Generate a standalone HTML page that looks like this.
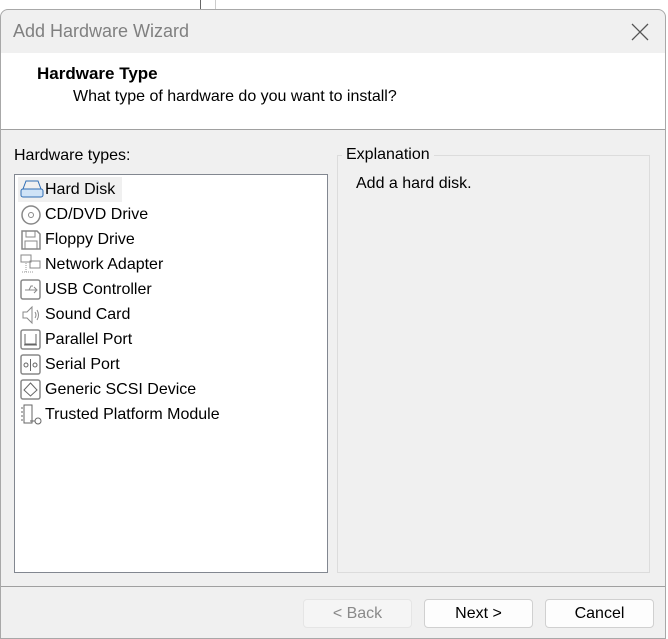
<!DOCTYPE html>
<html><head><style>
*{margin:0;padding:0;box-sizing:border-box}
body{width:668px;height:634px;background:#fff;font-family:"Liberation Sans",sans-serif;font-size:16px;color:#000;position:relative;overflow:hidden}
.a{position:absolute}
.dlg{left:0;top:9px;width:666px;height:630px;background:#f0f0f0;border:1px solid #a8a8a8;border-radius:8px 8px 0 0;overflow:hidden}
.btn{position:absolute;top:589px;height:29px;width:109px;background:#fdfdfd;border:1px solid #d0d0d0;border-radius:4px;text-align:center;line-height:27px;font-size:16px}
.item{position:absolute;left:3px;height:25px;line-height:25px;padding-left:27px;white-space:nowrap}
.item svg{position:absolute;left:2px;top:2px}
</style></head><body>
<div class="a" style="left:200px;top:0;width:1px;height:10px;background:#666"></div>
<div class="a" style="left:215px;top:0;width:1px;height:10px;background:#ccc"></div>
<div class="a dlg">
 <div class="a" style="left:12px;top:11px;font-size:18px;color:#808080">Add Hardware Wizard</div>
 <svg class="a" style="left:630px;top:13px" width="18" height="18"><path d="M1 1L17 17M17 1L1 17" stroke="#555" stroke-width="1.3"/></svg>
 <div class="a" style="left:0;top:43px;width:666px;height:77px;background:#fff;border-bottom:1px solid #a0a0a0"></div>
 <div class="a" style="left:36px;top:54px;font-weight:bold;font-size:17px">Hardware Type</div>
 <div class="a" style="left:72px;top:78px;font-size:16px">What type of hardware do you want to install?</div>
 <div class="a" style="left:13px;top:137px">Hardware types:</div>
 <div class="a" style="left:13px;top:164px;width:314px;height:399px;background:#fff;border:1px solid #828790">
  <div class="item" style="top:2px;background:#f0f0f0;width:104px">
   <svg width="24" height="20"><rect x="1" y="10" width="22" height="8" rx="2" fill="#cfe3f7" stroke="#2f6eb5"/><path d="M3 10 L6 2 H18 L21 10" fill="none" stroke="#2f6eb5"/></svg>Hard Disk</div>
  <div class="item" style="top:27px"><svg width="22" height="22"><circle cx="11" cy="11" r="9" fill="none" stroke="#888" stroke-width="1.5"/><circle cx="11" cy="11" r="2.5" fill="none" stroke="#888"/></svg>CD/DVD Drive</div>
  <div class="item" style="top:52px"><svg width="22" height="22"><path d="M2 2H17L20 5V20H2Z" fill="none" stroke="#888" stroke-width="1.5"/><rect x="6" y="2" width="9" height="6" fill="none" stroke="#888"/><rect x="5" y="12" width="12" height="8" fill="none" stroke="#888"/></svg>Floppy Drive</div>
  <div class="item" style="top:77px"><svg width="22" height="22"><rect x="1" y="1" width="10" height="7" fill="none" stroke="#888"/><rect x="10" y="7" width="10" height="7" fill="none" stroke="#888"/><path d="M2 18H14M6 9V18" stroke="#999" stroke-dasharray="1 1"/></svg>Network Adapter</div>
  <div class="item" style="top:102px"><svg width="22" height="22"><rect x="1" y="1" width="19" height="19" rx="2" fill="none" stroke="#888" stroke-width="1.5"/><path d="M5 11H16M14 8L17 11 14 14M9 11L11 7H13" fill="none" stroke="#888"/></svg>USB Controller</div>
  <div class="item" style="top:127px"><svg width="22" height="22"><path d="M3 8H7L12 3V19L7 14H3Z" fill="none" stroke="#888"/><path d="M15 8Q17 11 15 14M17 6Q20 11 17 16" fill="none" stroke="#888"/></svg>Sound Card</div>
  <div class="item" style="top:152px"><svg width="22" height="22"><rect x="1" y="1" width="19" height="19" rx="2" fill="none" stroke="#888" stroke-width="1.5"/><path d="M5 5V15H16V5M4 16H17" fill="none" stroke="#666"/></svg>Parallel Port</div>
  <div class="item" style="top:177px"><svg width="22" height="22"><rect x="1" y="1" width="19" height="19" rx="2" fill="none" stroke="#888" stroke-width="1.5"/><circle cx="6" cy="11" r="2" fill="none" stroke="#666"/><circle cx="15" cy="11" r="2" fill="none" stroke="#666"/><path d="M10.5 5V17" stroke="#666"/></svg>Serial Port</div>
  <div class="item" style="top:202px"><svg width="22" height="22"><rect x="1" y="1" width="19" height="19" rx="2" fill="none" stroke="#888" stroke-width="1.5"/><path d="M10.5 4L17 11 10.5 17 4 11Z" fill="none" stroke="#666"/></svg>Generic SCSI Device</div>
  <div class="item" style="top:227px"><svg width="24" height="22"><path d="M4 1H12V19H4Z" fill="none" stroke="#666"/><path d="M1 4H3M1 8H3M1 12H3M1 16H3" stroke="#666"/><circle cx="18" cy="17" r="3" fill="none" stroke="#666"/><path d="M10 17H15" stroke="#666"/></svg>Trusted Platform Module</div>
 </div>
 <div class="a" style="left:336px;top:145px;width:313px;height:418px;border:1px solid #dcdcdc"></div>
 <div class="a" style="left:341px;top:136px;background:#f0f0f0;padding:0 4px">Explanation</div>
 <div class="a" style="left:355px;top:165px">Add a hard disk.</div>
 <div class="a" style="left:0;top:576px;width:666px;height:1px;background:#a0a0a0"></div>
 <div class="btn" style="left:302px;color:#8a8a8a;background:#f5f5f5;border-color:#e5e5e5">&lt; Back</div>
 <div class="btn" style="left:423px">Next &gt;</div>
 <div class="btn" style="left:544px">Cancel</div>
</div>
</body></html>
